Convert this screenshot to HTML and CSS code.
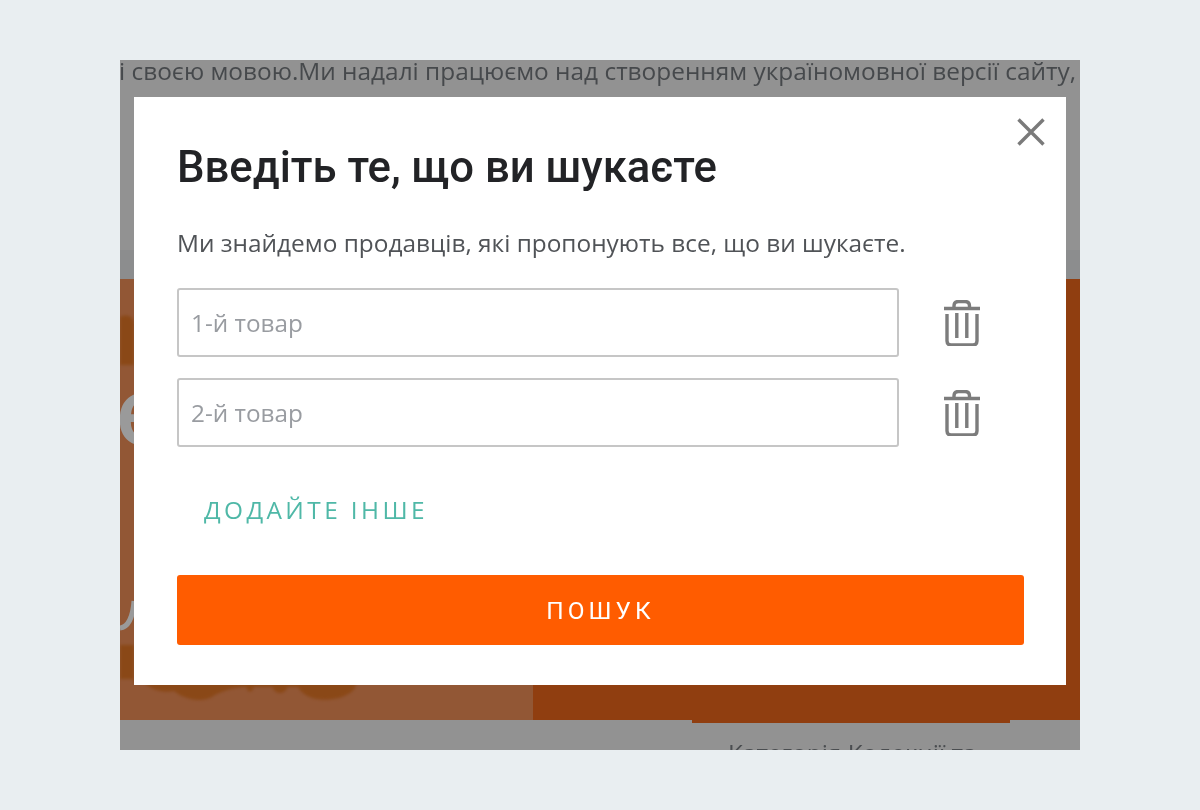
FILE: index.html
```html
<!DOCTYPE html>
<html lang="uk">
<head>
<meta charset="utf-8">
<title>Пошук</title>
<link rel="stylesheet" href="styles.css">
</head>
<body>
<div class="frame">
  <div class="page">
    <div class="notice">і своєю мовою.Ми надалі працюємо над створенням україномовної версії сайту,</div>
    <div class="band"></div>
    <div class="hero">
      <div class="hero-left">
        <span class="hero-letter">е</span>
        <svg class="hero-art" viewBox="0 0 413 441" aria-hidden="true">
          <path class="crumb" d="M0 38C8 34 14 38 14 46V86H0Z"/>
          <path class="crumb" d="M0 366H14V404H24C34 412 44 414 54 412C64 420 80 424 92 418C100 412 116 408 126 408C128 414 132 414 134 408H152C156 416 164 416 168 408H178C184 420 204 424 222 418C232 414 236 410 236 404V400H0Z"/>
          <path class="curve" d="M14 322C13 338 8 348 0 349"/>
        </svg>
      </div>
      <div class="hero-right"></div>
    </div>
    <div class="below">
      <div class="tab"></div>
      <div class="cat">Категорія Колекції та</div>
    </div>
  </div>
  <div class="modal">
    <svg class="close" viewBox="0 0 28 28" aria-hidden="true"><path d="M1.5 1.5 26.5 26.5M26.5 1.5 1.5 26.5"/></svg>
    <h1 class="title">Введіть те, що ви шукаєте</h1>
    <p class="lead">Ми знайдемо продавців, які пропонують все, що ви шукаєте.</p>
    <div class="rows">
      <div class="row">
        <input class="field" type="text" placeholder="1-й товар">
        <svg class="trash" viewBox="0 0 36 46" aria-hidden="true"><path d="M0 8.500H36M10 7.500V6C10 3 12 1.500 14.500 1.500H21C23.500 1.500 25.500 3 25.500 6V7.500M3 14V41C3 43.500 4.500 45 7 45H29C31.500 45 33 43.500 33 41V14M12.800 13V38M22.800 13V38"/></svg>
      </div>
      <div class="row">
        <input class="field" type="text" placeholder="2-й товар">
        <svg class="trash" viewBox="0 0 36 46" aria-hidden="true"><path d="M0 8.500H36M10 7.500V6C10 3 12 1.500 14.500 1.500H21C23.500 1.500 25.500 3 25.500 6V7.500M3 14V41C3 43.500 4.500 45 7 45H29C31.500 45 33 43.500 33 41V14M12.800 13V38M22.800 13V38"/></svg>
      </div>
    </div>
    <div class="add">ДОДАЙТЕ ІНШЕ</div>
    <button class="search" type="button">ПОШУК</button>
  </div>
</div>
</body>
</html>
```
FILE: styles.css
```css
* { box-sizing: border-box; }
html, body { margin: 0; height: 100%; }
body { background: #e9eef1; padding: 60px 120px; font-family: "Open Sans", sans-serif; }
.frame { position: relative; width: 960px; height: 690px; overflow: hidden; background: #929292; filter: blur(.55px); }
.page { display: flex; flex-direction: column; height: 100%; }
.notice { flex: none; height: 190px; font-size: 24.400px; line-height: 22px; color: #46494c; white-space: nowrap; text-indent: -1px; overflow: hidden; }
.band { flex: none; height: 29px; background: #8c8d8e; }
.hero { display: flex; height: 441px; flex: none; }
.hero-left { position: relative; width: 413px; background: #925735; overflow: hidden; }
.hero-right { flex: 1; background: #903e10; }
.hero-letter { position: absolute; left: -5px; top: 90px; font-size: 94px; font-weight: 600; line-height: 80px; color: #9a9a9a; }
.hero-art { position: absolute; inset: 0; width: 100%; height: 100%; }
.crumb { fill: #8a4714; opacity: .9; filter: blur(1.5px); }
.curve { fill: none; stroke: #9a9a9a; stroke-width: 5; }
.below { flex: 1; display: flex; flex-direction: column; align-items: flex-start; padding-left: 572px; }
.tab { flex: none; width: 318px; height: 3px; background: #903e10; }
.cat { padding: 15px 0 0 36px; font-size: 24.400px; line-height: 30px; color: #4a4d50; white-space: nowrap; }
.modal { position: absolute; left: 14px; top: 37px; width: 932px; height: 588px; background: #fff; padding: 45px 42px 0 43px; display: flex; flex-direction: column; }
.close { position: absolute; right: 21px; top: 21px; width: 28px; height: 28px; fill: none; stroke: #7a7a7a; stroke-width: 3.400; }
.title { margin: 0; font: 500 43.650px/52px Roboto, sans-serif; color: #222326; white-space: nowrap; }
.lead { margin: 34px 0 0; font-size: 24.400px; line-height: 30px; color: #505357; white-space: nowrap; }
.rows { margin-top: 30px; display: flex; flex-direction: column; gap: 21px; }
.row { display: flex; align-items: center; gap: 45px; }
.field { width: 722px; height: 69px; border: 2px solid #c6c6c6; border-radius: 3px; padding: 0 12px; font: 24.300px "Open Sans", sans-serif; outline: none; background: #fff; }
.field::placeholder { color: #999ca1; opacity: 1; }
.trash { width: 36px; height: 46px; fill: none; stroke: #7c7c7c; stroke-width: 3.400; }
.add { margin: 48px 0 0 27px; font: 500 24.400px/30px "Open Sans", sans-serif; letter-spacing: 3.400px; color: #4fb8a7; white-space: nowrap; }
.search { margin-top: 50px; height: 70px; width: 847px; border: 0; border-radius: 3px; background: #ff5c00; color: #fff; font: 400 24.400px Roboto, sans-serif; letter-spacing: 4.100px; }
```
